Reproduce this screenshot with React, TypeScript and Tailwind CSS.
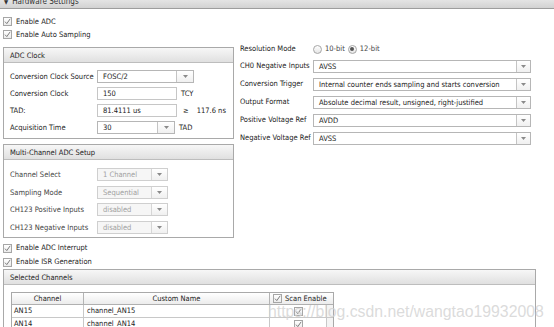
import type { ReactNode } from "react";

// Small gray check box used all over the settings page
const Check = ({ className = "" }: { className?: string }) => (
  <span
    className={`relative inline-block h-[9px] w-[9px] shrink-0 border border-[#a6a6a6] bg-gradient-to-b from-white to-[#ebebeb] ${className}`}
  >
    <svg viewBox="0 0 7 7" className="absolute left-0 top-0 h-[7px] w-[7px]">
      <path d="M1 3.7 L2.8 5.6 L6.2 0.8" fill="none" stroke="#707070" strokeWidth="0.9" />
    </svg>
  </span>
);

const Arrow = () => (
  <svg viewBox="0 0 5 3" className="h-[3px] w-[5px]">
    <path d="M0 0 L5 0 L2.5 3 Z" fill="#8a8a8a" />
  </svg>
);

const Select = ({
  value,
  className,
  arrowClass = "w-[17px]",
  disabled,
}: {
  value: string;
  className: string;
  arrowClass?: string;
  disabled?: boolean;
}) => (
  <div
    className={`flex h-[13px] border ${
      disabled
        ? "border-[#cfcfcf] bg-[#f6f6f6] text-[#a0a0a0]"
        : "border-[#b6b6b6] bg-white text-[#222]"
    } ${className}`}
  >
    <span className="flex-1 truncate pl-[5px] leading-[11px]">{value}</span>
    <span
      className={`flex items-center justify-center border-l ${
        disabled ? "border-[#d6d6d6]" : "border-[#c4c4c4]"
      } bg-gradient-to-b from-white to-[#f0f0f0] ${arrowClass}`}
    >
      <Arrow />
    </span>
  </div>
);

const Input = ({ value, className }: { value: string; className: string }) => (
  <div
    className={`h-[13px] border border-[#c6c6c6] bg-white pl-[5px] leading-[11px] text-[#222] ${className}`}
  >
    {value}
  </div>
);

const Panel = ({
  title,
  className = "",
  children,
}: {
  title: string;
  className?: string;
  children?: ReactNode;
}) => (
  <div className={`border border-[#a9a9a9] bg-white ${className}`}>
    <div className="h-[15px] border-b border-[#bdbdbd] bg-gradient-to-b from-[#f7f7f7] to-[#e0e0e0] pl-[6px] leading-[15px] text-[#222]">
      {title}
    </div>
    {children}
  </div>
);

const CheckRow = ({ label, className = "" }: { label: string; className?: string }) => (
  <div className={`flex items-center gap-[4px] ${className}`}>
    <Check />
    <span className="text-[#222]">{label}</span>
  </div>
);

const Radio = ({ on }: { on?: boolean }) => (
  <span className="relative inline-flex h-[9px] w-[9px] items-center justify-center rounded-full border border-[#a6a6a6] bg-gradient-to-b from-white to-[#e6e6e6]">
    {on && <span className="h-[4px] w-[4px] rounded-full bg-[#555]" />}
  </span>
);

const rightRows = [
  { label: "CH0 Negative Inputs", value: "AVSS" },
  { label: "Conversion Trigger", value: "Internal counter ends sampling and starts conversion" },
  { label: "Output Format", value: "Absolute decimal result, unsigned, right-justified" },
  { label: "Positive Voltage Ref", value: "AVDD" },
  { label: "Negative Voltage Ref", value: "AVSS" },
];

const multiRows = [
  { label: "Channel Select", value: "1 Channel" },
  { label: "Sampling Mode", value: "Sequential" },
  { label: "CH123 Positive Inputs", value: "disabled" },
  { label: "CH123 Negative Inputs", value: "disabled" },
];

const channels = [
  { ch: "AN15", name: "channel_AN15" },
  { ch: "AN14", name: "channel_AN14" },
];

export default function App() {
  return (
    <div className="relative h-[327px] w-[554px] overflow-hidden bg-white font-['DejaVu_Sans_Condensed','DejaVu_Sans',sans-serif] text-[7.5px] text-[#222]">
      {/* section title bar, scrolled half out of view */}
      <div className="h-[9px] overflow-hidden border-b border-[#9d9d9d] bg-gradient-to-b from-[#e4e4e4] to-[#d2d2d2]">
        <div className="-mt-[4px] flex items-center gap-[4px] pl-[4px] text-[8px] leading-[12px] text-[#333]">
          <span className="text-[6px]">▼</span>
          <span>Hardware Settings</span>
        </div>
      </div>

      <div className="pl-[3px] pt-[6px]">
        <CheckRow label="Enable ADC" className="h-[13px]" />
        <CheckRow label="Enable Auto Sampling" className="h-[13px]" />
      </div>

      <div className="flex">
        <div className="ml-[3px] mt-[6px] w-[231px]">
          <Panel title="ADC Clock">
            <div className="px-[6px] pb-[2px] pt-[5px]">
              <div className="flex h-[17px] items-center">
                <span className="w-[87px]">Conversion Clock Source</span>
                <Select value="FOSC/2" className="w-[97px]" arrowClass="w-[17px]" />
              </div>
              <div className="flex h-[17px] items-center">
                <span className="w-[87px]">Conversion Clock</span>
                <Input value="150" className="w-[80px]" />
                <span className="ml-[4px]">TCY</span>
              </div>
              <div className="flex h-[17px] items-center">
                <span className="w-[87px]">TAD:</span>
                <Input value="81.4111 us" className="w-[80px]" />
                <span className="ml-[6px]">≥</span>
                <span className="ml-[8px]">117.6 ns</span>
              </div>
              <div className="flex h-[17px] items-center">
                <span className="w-[87px]">Acquisition Time</span>
                <Select value="30" className="w-[78px]" arrowClass="w-[17px]" />
                <span className="ml-[4px]">TAD</span>
              </div>
            </div>
          </Panel>

          <Panel title="Multi-Channel ADC Setup" className="mt-[5px]">
            <div className="px-[6px] pb-[1px] pt-[6px]">
              {multiRows.map((r) => (
                <div key={r.label} className="flex h-[17.5px] items-center">
                  <span className="w-[87px] text-[#444]">{r.label}</span>
                  <Select value={r.value} className="w-[71px]" arrowClass="w-[16px]" disabled />
                </div>
              ))}
            </div>
          </Panel>
        </div>

        <div className="ml-[6px] w-[292px]">
          <div className="flex h-[16px] items-center">
            <span className="w-[73px]">Resolution Mode</span>
            <Radio />
            <span className="ml-[3px] text-[#444]">10-bit</span>
            <span className="ml-[3px]">
              <Radio on />
            </span>
            <span className="ml-[3px] text-[#444]">12-bit</span>
          </div>
          {rightRows.map((r) => (
            <div key={r.label} className="flex h-[18px] items-center">
              <span className="w-[73px] whitespace-nowrap">{r.label}</span>
              <Select value={r.value} className="w-[218px]" arrowClass="w-[14px]" />
            </div>
          ))}
        </div>
      </div>

      <div className="pl-[3px] pt-[3px]">
        <CheckRow label="Enable ADC Interrupt" className="h-[14px]" />
        <CheckRow label="Enable ISR Generation" className="h-[14px]" />
      </div>

      <Panel title="Selected Channels" className="ml-[3px] w-[533px]">
        <div className="pl-[7px] pt-[7px]">
          <div className="w-[323px] border border-[#a9a9a9]">
            <div className="flex h-[12px] border-b border-[#b0b0b0] bg-gradient-to-b from-white to-[#ececec] leading-[11px]">
              <span className="w-[72px] border-r border-[#b4b4b4] text-center">Channel</span>
              <span className="w-[186px] border-r border-[#b4b4b4] text-center">Custom Name</span>
              <span className="flex flex-1 items-center gap-[3px] pl-[3px]">
                <Check />
                <span>Scan Enable</span>
              </span>
            </div>
            {channels.map((c) => (
              <div key={c.ch} className="flex h-[13px] border-b border-[#c8c8c8] leading-[12px]">
                <span className="w-[72px] border-r border-[#c8c8c8] pl-[2px]">{c.ch}</span>
                <span className="w-[186px] border-r border-[#c8c8c8] pl-[3px]">{c.name}</span>
                <span className="flex w-[57px] items-center justify-center border-r border-[#c8c8c8]">
                  <Check />
                </span>
                <span className="flex-1 bg-[#f4f4f4]" />
              </div>
            ))}
          </div>
        </div>
      </Panel>

      {/* watermark over the screenshot */}
      <div className="pointer-events-none absolute left-[268px] top-[303px] font-['Liberation_Sans',sans-serif] text-[15.8px] leading-[18px] text-[#d2d2d2]/80">
        https://blog.csdn.net/wangtao19932008
      </div>
    </div>
  );
}
